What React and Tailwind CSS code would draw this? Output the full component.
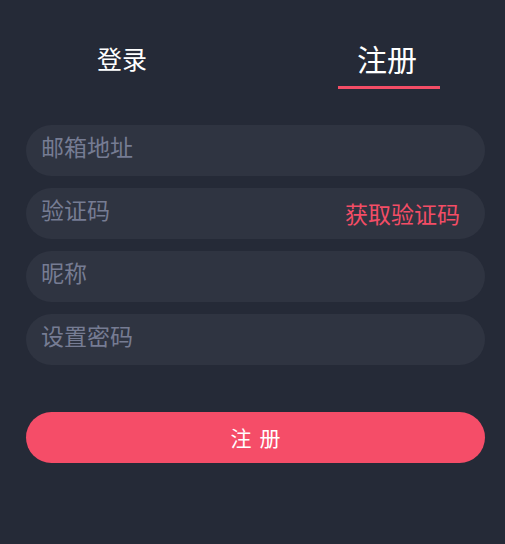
import { useState } from "react";

const fieldClass =
  "w-full h-[51px] rounded-full bg-[#2f3441] pl-[15px] pr-[25px] flex items-center";
const inputClass =
  "flex-1 min-w-0 bg-transparent outline-none text-[23px] text-white placeholder:text-[#767c93] mb-[9px]";

const App = () => {
  const [tab, setTab] = useState("register");

  return (
    <div
      className="min-h-screen w-full bg-[#252a37]"
      style={{ fontFamily: '"Noto Sans CJK SC", "Noto Sans", sans-serif' }}
    >
      <div className="flex justify-between items-end pl-[71px] pr-[65px] pt-[42px]">
        <div
          className="w-[102px] flex flex-col items-center cursor-pointer"
          onClick={() => setTab("login")}
        >
          <div className="text-[25px] leading-[32px] text-white">登录</div>
          <div
            className={`h-[3px] w-[102px] mt-[12px] ${
              tab === "login" ? "bg-[#f44d66]" : "bg-transparent"
            }`}
          ></div>
        </div>
        <div
          className="w-[102px] flex flex-col items-center cursor-pointer"
          onClick={() => setTab("register")}
        >
          <div className="text-[30px] leading-[32px] text-white mr-[4px]">注册</div>
          <div
            className={`h-[3px] w-[102px] mt-[12px] ${
              tab === "register" ? "bg-[#f44d66]" : "bg-transparent"
            }`}
          ></div>
        </div>
      </div>

      <div className="pl-[26px] pr-[20px] mt-[36px] flex flex-col gap-[12px]">
        <div className={fieldClass}>
          <input className={inputClass} placeholder="邮箱地址" />
        </div>
        <div className={fieldClass}>
          <input className={inputClass} placeholder="验证码" />
          <button className="text-[23px] text-[#f44d66] shrink-0">获取验证码</button>
        </div>
        <div className={fieldClass}>
          <input className={inputClass} placeholder="昵称" />
        </div>
        <div className={fieldClass}>
          <input className={inputClass} type="password" placeholder="设置密码" />
        </div>

        <button className="mt-[35px] w-full h-[51px] rounded-full bg-[#f54d68] text-white text-[21px] tracking-[8px] pl-[8px]">
          注册
        </button>
      </div>
    </div>
  );
};

export default App;
